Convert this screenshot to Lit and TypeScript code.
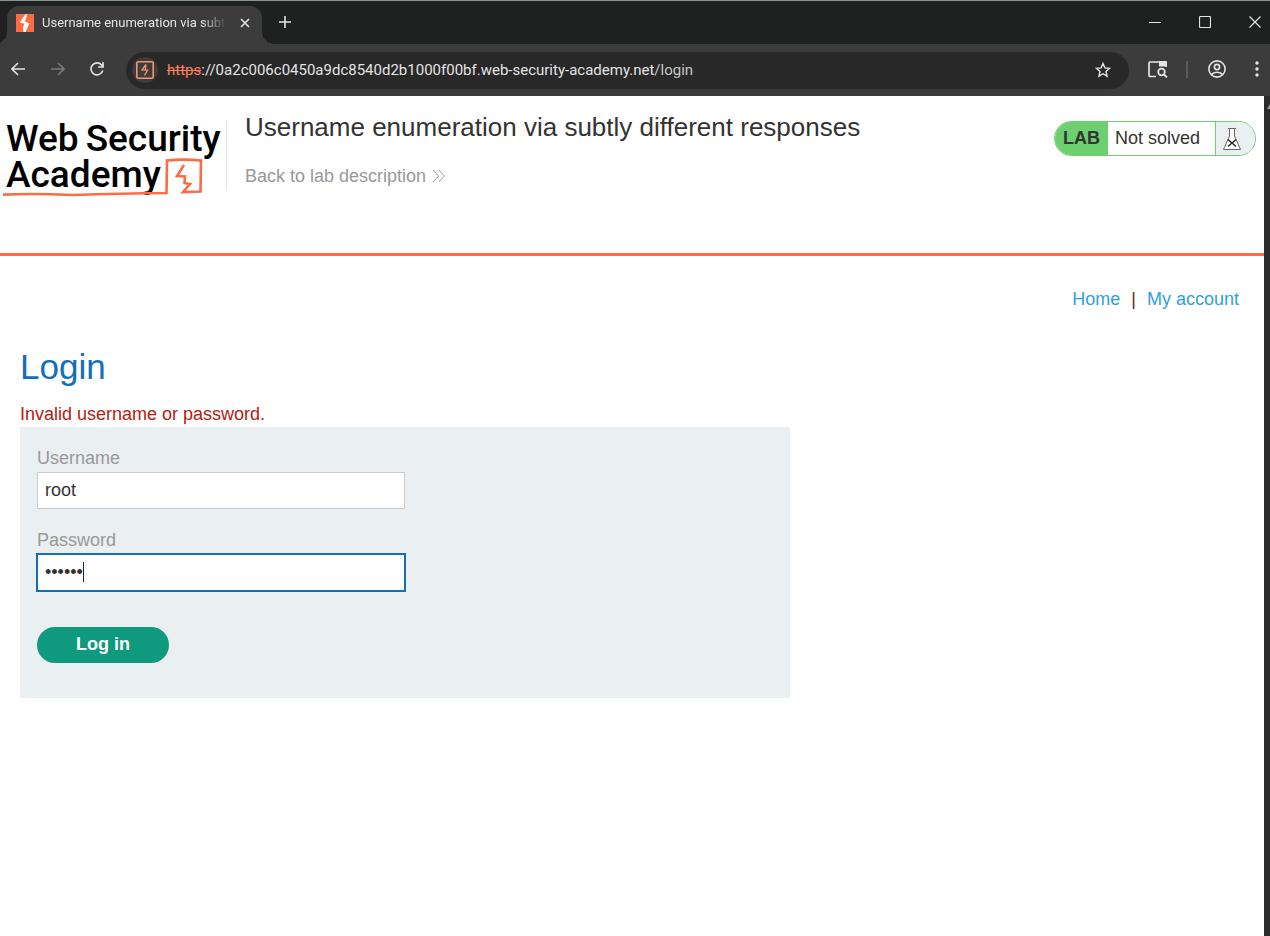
import { LitElement, html, css } from "lit";
import { customElement } from "lit/decorators.js";

@customElement("browser-chrome")
class BrowserChrome extends LitElement {
  static styles = css`
    :host { display: block; color: #e3e3e3; font-family: Roboto, sans-serif; }
    * { box-sizing: border-box; }
    button { border: 0; padding: 0; margin: 0; background: none; color: inherit; display: grid; place-items: center; flex: none; }
    svg { display: block; fill: none; stroke: currentColor; stroke-width: 2; }
    .strip { display: flex; height: 44px; background: #1f2121; border-top: 1px solid #8d9391; padding-left: 7px; }
    .tab { display: flex; align-items: center; width: 255px; height: 38px; margin-top: 5px; padding: 0 7px 5px 9px; background: #3c3c3c; border-radius: 12px 12px 0 0; position: relative; }
    .tab::before, .tab::after { content: ""; position: absolute; bottom: 0; width: 12px; height: 12px; }
    .tab::before { left: -12px; background: radial-gradient(circle at 0 0, transparent 12px, #3c3c3c 12px); }
    .tab::after { right: -12px; background: radial-gradient(circle at 100% 0, transparent 12px, #3c3c3c 12px); }
    .title { flex: 1; margin-left: 8px; font: 13px/20px "Noto Sans", sans-serif; font-size: 13px; white-space: nowrap; overflow: hidden; mask-image: linear-gradient(90deg, #000 86%, transparent); }
    .title { font-family: Roboto, sans-serif; }
    .close { width: 20px; height: 20px; margin-left: 8px; }
    .plus { width: 46px; height: 42px; }
    .window { display: flex; margin-left: auto; }
    .window button { width: 50px; height: 42px; }
    .window button:last-child { width: 40px; padding-left: 10px; }
    .bar { display: flex; align-items: center; height: 52px; background: #3c3c3c; padding: 0 1px 2px 0; }
    .nav { display: flex; gap: 4px; width: 126px; }
    .nav button { width: 36px; height: 36px; }
    .nav button:last-child { width: 34px; }
    .dim { color: #7a7a7a; }
    .address { display: flex; align-items: center; flex: 1; min-width: 0; height: 37px; margin-top: 2px; padding: 0 18px 0 6px; background: #282828; border-radius: 19px; }
    .site { width: 26px; height: 26px; border-radius: 13px; background: #3c3c3c; color: #ff9068; }
    .url { flex: 1; min-width: 0; margin-left: 9px; overflow: hidden; white-space: nowrap; font-size: 15px; line-height: 22px; }
    .url s { color: #ff8058; }
    .path { color: #c7c7c7; }
    .tools { display: flex; align-items: center; margin-left: 10px; }
    .tools button { width: 38px; height: 36px; }
    .tools .more { width: 24px; margin-left: 9px; }
    .rule { width: 2px; height: 17px; margin: 0 10px 0 9px; background: #5c5c5c; }
  `;

  render() {
    return html`
      <div class="strip">
        <div class="tab">
          <svg width="18" height="18" viewBox="0 0 18 18"><path fill="#ff6b42" stroke="none" d="M0 0h18v18H0z"/><path d="M9.500 0 3.800 8.500l4.600 1.300L7 13.500l.5 4.500h2l4-8.500-4.500-2L10.500 3 11 0z" fill="#fff" stroke="none"/></svg>
          <span class="title">Username enumeration via subt</span>
          <button class="close" aria-label="Close tab"><svg width="10" height="10" viewBox="0 0 10 10"><path d="m1 1 8 8m0-8-8 8" stroke-width="1.6"/></svg></button>
        </div>
        <button class="plus" aria-label="New tab"><svg width="12" height="12" viewBox="0 0 12 12"><path d="M6 0v12M0 6h12" stroke-width="1.6"/></svg></button>
        <div class="window">
          <button aria-label="Minimize"><svg width="12" height="12" viewBox="0 0 12 12"><path d="M0 6.5h12" stroke-width="1"/></svg></button>
          <button aria-label="Maximize"><svg width="12" height="12" viewBox="0 0 12 12"><rect x=".5" y=".5" width="11" height="11" rx="1" stroke-width="1.2"/></svg></button>
          <button aria-label="Close"><svg width="12" height="12" viewBox="0 0 12 12"><path d="m.5.5 11 11m0-11-11 11" stroke-width="1.2"/></svg></button>
        </div>
      </div>
      <div class="bar">
        <div class="nav">
          <button aria-label="Back"><svg width="14" height="14" viewBox="0 0 14 14"><path d="M14 7H1.5M7 1 1 7l6 6" stroke-width="1.6"/></svg></button>
          <button class="dim" aria-label="Forward"><svg width="14" height="14" viewBox="0 0 14 14"><path d="M0 7h12.5M7 1l6 6-6 6" stroke-width="1.6"/></svg></button>
          <button aria-label="Reload"><svg width="14" height="14" viewBox="0 0 14 14"><path d="M12.8 8.5A6 6 0 1 1 11.6 3L13 4.6M13.1 0v5H8.2" stroke-width="1.6"/></svg></button>
        </div>
        <div class="address">
          <button class="site" aria-label="Site information"><svg width="18" height="18" viewBox="0 0 18 18"><rect x=".8" y=".8" width="16.4" height="16.4" rx="1.5" stroke-width="1.6"/><path d="M10 3.500 6 9l5.600.2L8.500 14.500M10 3.500 9.300 9" stroke-width="1.3"/></svg></button>
          <span class="url"><s>https</s>://0a2c006c0450a9dc8540d2b1000f00bf.web-security-academy.net<span class="path">/login</span></span>
          <button aria-label="Bookmark"><svg width="16" height="16" viewBox="0 0 16 16"><path d="m8 1.5 1.9 4.4 4.8.4L11 9.5l1.1 4.7L8 11.700l-4.100 2.500L5 9.500 1.300 6.300l4.800-.4z" stroke-width="1.4"/></svg></button>
        </div>
        <div class="tools">
          <button aria-label="Search tabs"><svg width="20" height="18" viewBox="0 0 20 18"><path d="M8 16.500H2.200Q1 16.500 1 15.300V3.200Q1 2 2.200 2H18V7" stroke-width="1.7"/><path d="M11 1h6.500Q19 1 19 2.500V6.500h-8z" fill="currentColor" stroke="none"/><circle cx="13.500" cy="12" r="3.300" stroke-width="1.800"/><path d="m16 14.500 3 3" stroke-width="1.8"/></svg></button>
          <span class="rule"></span>
          <button aria-label="Profile"><svg width="18" height="18" viewBox="0 0 18 18"><circle cx="9" cy="9" r="8.1" stroke-width="1.6"/><circle cx="9" cy="7" r="2.6" stroke-width="1.6"/><path d="M3.400 14.500q5.600-4.400 11.200 0" stroke-width="1.6"/></svg></button>
          <button class="more" aria-label="Menu"><svg width="4" height="16" viewBox="0 0 4 16"><g fill="currentColor" stroke="none"><circle cx="2" cy="2" r="1.700"/><circle cx="2" cy="8" r="1.700"/><circle cx="2" cy="14" r="1.700"/></g></svg></button>
        </div>
      </div>`;
  }
}

@customElement("lab-header")
class LabHeader extends LitElement {
  static styles = css`
    :host { display: flex; align-items: flex-start; height: 160px; border-bottom: 3px solid #ff6b42; padding: 0 8px 0 3px; box-sizing: border-box; }
    * { box-sizing: border-box; }
    .logo { position: relative; flex: none; width: 224px; height: 70px; margin-top: 24px; padding-top: 1px; border-right: 1px solid #e2e2e2; color: #000; text-decoration: none; font-family: Roboto, sans-serif; font-weight: 500; font-size: 37px; line-height: 36px; }
    .row { display: flex; gap: 7px; padding-left: 3px; }
    .mark { position: absolute; left: 0; top: 36px; fill: none; stroke: #ff6b42; stroke-width: 2.6; }
    .text { flex: 1; min-width: 0; padding: 16px 18px 0; }
    h2 { margin: 0; font-weight: 400; font-size: 26px; line-height: 30px; color: #333332; }
    .back { display: flex; align-items: center; gap: 6px; width: max-content; margin-top: 24px; color: #999; font-size: 18px; line-height: 20px; text-decoration: none; }
    .back svg { fill: none; stroke: #999; }
    .status { display: flex; flex: none; width: 202px; height: 35px; margin-top: 25px; border: 1px solid #6ccf70; border-radius: 18px; overflow: hidden; font-size: 18px; line-height: 33px; color: #333332; }
    .tag { width: 53px; padding-left: 8px; background: #6ccf70; font-weight: 700; }
    .state { flex: 1; padding-left: 7px; background: #fff; }
    .flask { display: grid; place-items: center start; width: 40px; padding-left: 6px; border-left: 1px solid #6ccf70; background: #eaeff2; }
    .flask svg { fill: #fff; stroke: #666; }
  `;

  render() {
    return html`
      <a class="logo" href="#">
        <div class="row"><span>Web</span><span>Security</span></div>
        <div class="row">Academy</div>
        <svg class="mark" width="202" height="42" viewBox="0 0 202 42"><path d="M0 38.600Q30 37.200 70 39Q120 37.500 163.500 37L164 4.500Q181 2.800 198 4.500L197.500 35.500 180 36 187 28 181.500 27 182 20.500 174 20 181 9"/></svg>
      </a>
      <div class="text">
        <h2>Username enumeration via subtly different responses</h2>
        <a class="back" href="#">Back to lab description
          <svg width="14" height="14" viewBox="0 0 14 14"><path d="m1 1 5.500 6L1 13M7 1l5.500 6L7 13"/></svg></a>
      </div>
      <div class="status">
        <span class="tag">LAB</span>
        <span class="state">Not solved</span>
        <span class="flask"><svg width="20" height="24" viewBox="0 0 20 24"><path d="M6 1.500h8M7.500 2v7L1.500 22.500h17L12.500 9V2"/><path d="m6 12.500 8 7m0-7-8 7" stroke="#222" stroke-width="1.400"/></svg></span>
      </div>`;
  }
}

@customElement("login-form")
class LoginForm extends LitElement {
  static styles = css`
    :host { display: block; max-width: 770px; }
    * { box-sizing: border-box; }
    h1 { margin: 0; color: #136fb9; font-weight: 400; font-size: 35px; line-height: 42px; }
    .warning { margin: 16px 0 3px; color: #b4200f; font-size: 18px; line-height: 20px; }
    form { display: flex; flex-direction: column; align-items: flex-start; background: #eaeff2; padding: 21px 17px 35px; }
    label { color: #999; font-size: 18px; line-height: 21px; margin-bottom: 3px; }
    .field { position: relative; width: 50%; margin-bottom: 21px; }
    input { display: block; width: 100%; height: 37px; margin: 0; padding: 0 7px; border: 1px solid #c8cccd; border-radius: 0; outline: none; background: #fff; color: #333332; font: 18px "Liberation Sans", Arial, sans-serif; caret-color: transparent; }
    input.active { outline: 1px solid #136fb9; border-color: #136fb9; }
    .caret { position: absolute; left: 46px; top: 8px; width: 1px; height: 20px; background: #222; pointer-events: none; }
    button { width: 132px; height: 36px; margin-top: 15px; padding: 0 0 2px; border: 0; border-radius: 18px; background: #0f997f; color: #fff; font: 700 18px "Liberation Sans", Arial, sans-serif; }
  `;

  render() {
    return html`
      <h1>Login</h1>
      <p class="warning">Invalid username or password.</p>
      <form @submit=${(e: Event) => e.preventDefault()}>
        <label for="username">Username</label>
        <div class="field"><input id="username" type="text" .value=${"root"} /></div>
        <label for="password">Password</label>
        <div class="field"><input class="active" id="password" type="password" .value=${"secret"} /><span class="caret"></span></div>
        <button type="submit">Log in</button>
      </form>`;
  }
}

@customElement("app-root")
class AppRoot extends LitElement {
  static styles = css`
    :host { display: flex; flex-direction: column; min-height: 100vh; background: #fff; font-family: "Liberation Sans", Arial, sans-serif; }
    .view { display: flex; flex: 1; }
    .page { flex: 1; min-width: 0; }
    .scroll { width: 6px; background: #2b2b2b; }
    .scroll svg { display: block; margin: 8px 0 0 3px; }
    nav { display: flex; justify-content: flex-end; gap: 11px; padding: 33px 25px 0 0; font-size: 18px; line-height: 20px; color: #5b2d0c; }
    nav a { color: #2f9fe0; text-decoration: none; }
    main { padding: 37px 20px 0; }
  `;

  render() {
    return html`
      <browser-chrome></browser-chrome>
      <div class="view">
        <div class="page">
          <lab-header></lab-header>
          <nav><a href="#">Home</a><span>|</span><a href="#">My account</a></nav>
          <main><login-form></login-form></main>
        </div>
        <div class="scroll"><svg width="3" height="5" viewBox="0 0 3 5"><path d="M3 0v5H0z" fill="#9b9b9b"/></svg></div>
      </div>`;
  }
}
